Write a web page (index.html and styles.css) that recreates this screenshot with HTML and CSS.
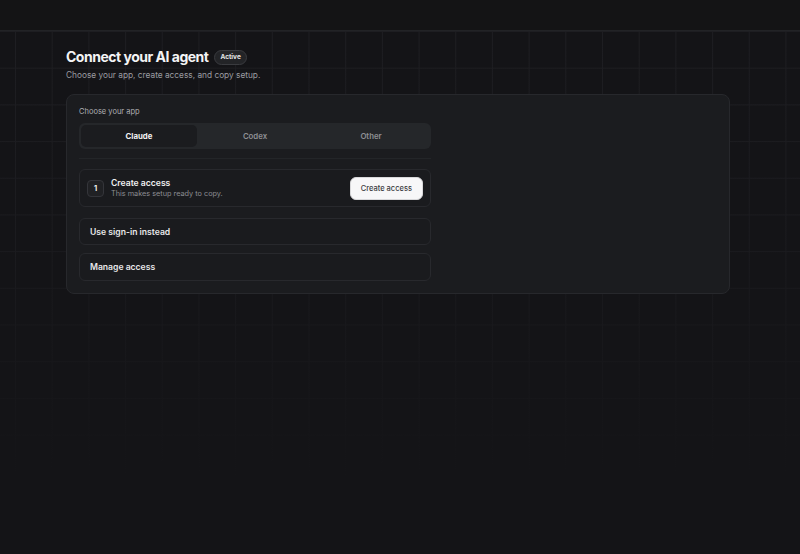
FILE: index.html
```html
<!DOCTYPE html>
<html lang="en">
<head>
<meta charset="utf-8">
<title>Connect your AI agent</title>
<link rel="stylesheet" href="styles.css">
</head>
<body>
<header class="topbar"></header>
<main class="page">
  <div class="heading">
    <h1 class="title">Connect your AI agent</h1>
    <span class="badge">Active</span>
  </div>
  <p class="subtitle">Choose your app, create access, and copy setup.</p>

  <section class="card">
    <div class="col">
      <div class="label">Choose your app</div>
      <div class="segmented">
        <button class="seg seg-active">Claude</button>
        <button class="seg">Codex</button>
        <button class="seg">Other</button>
      </div>
      <div class="divider"></div>
      <div class="step">
        <span class="step-num">1</span>
        <div class="step-text">
          <div class="step-title">Create access</div>
          <div class="step-desc">This makes setup ready to copy.</div>
        </div>
        <button class="btn-primary">Create access</button>
      </div>
      <div class="row">Use sign-in instead</div>
      <div class="row">Manage access</div>
    </div>
  </section>
</main>
</body>
</html>
```
FILE: styles.css
```css
* { box-sizing: border-box; }
html, body { margin: 0; height: 100%; }
body {
  background: #141417;
  font-family: Inter, "Noto Sans", "Liberation Sans", sans-serif;
  color: #ececee;
}
.topbar {
  height: 31px;
  background: #141415;
  border-bottom: 1px solid #222326;
}
.page {
  min-height: calc(100% - 31px);
  padding: 16px 66px 0 66px;
  background-color: #141417;
  background-image:
    linear-gradient(to bottom, rgba(20,20,23,0) 0, rgba(20,20,23,0.3) 40%, rgba(20,20,23,1) 85%),
    linear-gradient(to right, #1e1e22 1px, transparent 1px),
    linear-gradient(to bottom, #1e1e22 1px, transparent 1px);
  background-size: 100% 100%, 36.7px 36.7px, 36.7px 36.7px;
  background-position: 0 0, 15px 0, 0 0;
}
.heading {
  display: flex;
  align-items: center;
  gap: 6px;
}
.title {
  margin: 0;
  font-size: 14px;
  font-weight: 700;
  letter-spacing: -0.035em;
  color: #f4f4f5;
  line-height: 20px;
}
.badge {
  font-size: 6.5px;
  font-weight: 700;
  color: #e6e6e8;
  background: #232427;
  border: 1px solid #3a3b3f;
  border-radius: 8px;
  padding: 2px 5px;
  line-height: 9px;
}
.subtitle {
  margin: 2px 0 0;
  font-size: 8.3px;
  color: #9b9ca1;
  line-height: 12px;
}
.card {
  margin-top: 13px;
  width: 664px;
  background: #1b1c1f;
  border: 1px solid #27282c;
  border-radius: 8px;
  padding: 11px 12px 12px;
}
.col {
  width: 352px;
  display: flex;
  flex-direction: column;
}
.label {
  font-size: 7.5px;
  color: #aeafb3;
  line-height: 12px;
}
.segmented {
  margin-top: 5px;
  display: grid;
  grid-template-columns: 1fr 1fr 1fr;
  background: #25272a;
  border-radius: 6px;
  padding: 2px;
  height: 26px;
}
.seg {
  border: 0;
  background: transparent;
  font-family: inherit;
  font-size: 7.8px;
  font-weight: 600;
  color: #8e8f94;
  border-radius: 5px;
  padding: 0;
}
.seg-active {
  background: #1b1c1f;
  color: #f2f2f3;
  font-weight: 700;
}
.divider {
  height: 1px;
  background: #232528;
  margin: 9px 0 10px;
}
.step {
  display: flex;
  align-items: center;
  gap: 7px;
  height: 38px;
  padding: 0 7px 0 7px;
  border: 1px solid #28292d;
  border-radius: 6px;
  background: #1a1b1e;
}
.step-num {
  width: 17px;
  height: 17px;
  display: flex;
  align-items: center;
  justify-content: center;
  border: 1px solid #34353a;
  border-radius: 4px;
  background: #202124;
  font-size: 7.5px;
  font-weight: 700;
  color: #ededee;
}
.step-text { flex: 1; }
.step-title {
  font-size: 8.6px;
  font-weight: 600;
  color: #f0f0f1;
  line-height: 12px;
}
.step-desc {
  font-size: 7.3px;
  color: #8c8d92;
  line-height: 10px;
}
.btn-primary {
  height: 23px;
  padding: 0 10px;
  border: 1px solid #d8d8da;
  border-radius: 6px;
  background: #f7f7f8;
  color: #3a3b3f;
  font-family: inherit;
  font-size: 7.5px;
  font-weight: 500;
}
.row {
  margin-top: 11px;
  height: 27px;
  display: flex;
  align-items: center;
  padding: 0 10px;
  border: 1px solid #28292d;
  border-radius: 6px;
  background: #1a1b1e;
  font-size: 8.6px;
  font-weight: 600;
  color: #e8e8ea;
}
.row + .row { margin-top: 8px; height: 28px; }
```
